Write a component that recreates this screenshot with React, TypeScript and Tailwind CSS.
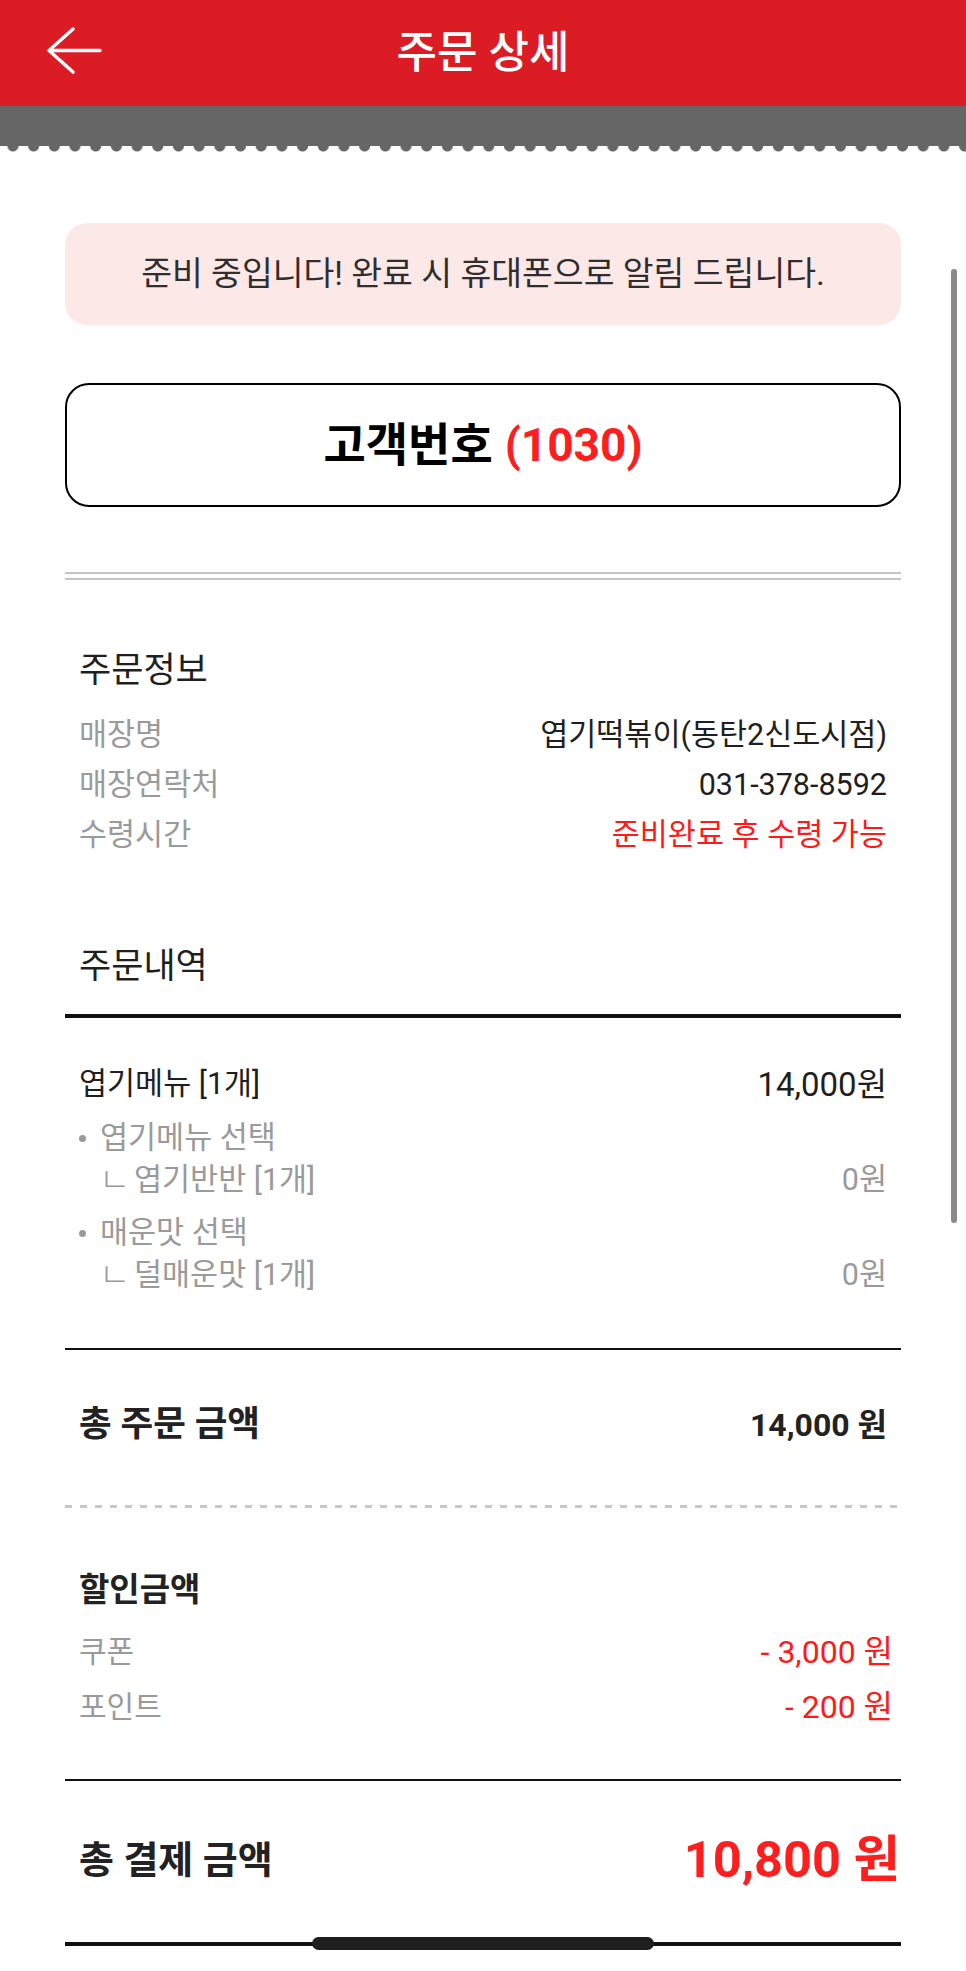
import React from 'react';

const FONT = "font-['Roboto','Noto_Sans_CJK_KR',sans-serif]";

function InfoRow({ label, value, red }: { label: string; value: string; red?: boolean }) {
	return (
		<div className="flex h-[50px] items-center justify-between text-[30.5px] leading-none">
			<span className="text-[#9a9a9a]">{label}</span>
			<span className={red ? 'text-[#ff1a1a]' : 'text-[#1f1f1f]'}>{value}</span>
		</div>
	);
}

function OptionGroup({ title, choice, price }: { title: string; choice: string; price: string }) {
	return (
		<div className="mt-[11px] text-[30.5px] leading-none text-[#9a9a9a]">
			<div className="flex h-[42px] items-center">
				<span className="h-[7px] w-[7px] rounded-full bg-[#9a9a9a]" />
				<span className="ml-[14px]">{title}</span>
			</div>
			<div className="flex h-[42px] items-center justify-between pl-[20px]">
				<span className="flex items-center">
					<span className="inline-block w-[35px] text-[34px] font-light leading-none">ㄴ</span>
					<span>{choice}</span>
				</span>
				<span>{price}</span>
			</div>
		</div>
	);
}

export default function App() {
	return (
		<div className={`relative min-h-[1971px] w-[966px] overflow-hidden bg-white ${FONT}`}>
			{/* header */}
			<div className="relative flex h-[106px] items-center justify-center bg-[#dc1c24]">
				<svg
					className="absolute left-[44px] top-[25px]"
					width="60"
					height="52"
					viewBox="44 25 60 52"
					fill="none"
					stroke="white"
					strokeWidth="3.5"
					strokeLinecap="round"
					strokeLinejoin="round"
				>
					<path d="M73 29 L49 50.5 L73 72 M49 50.5 H100" />
				</svg>
				<h1 className="text-[44px] font-medium leading-none text-white">주문 상세</h1>
			</div>
			<div className="h-[40px] bg-[#666666]" />
			<div className="h-[7px] bg-[radial-gradient(circle_at_50%_0,#666666_5px,transparent_6px)] bg-[length:20.7px_7px] bg-[position:2.6px_0] bg-repeat-x" />

			<main className="px-[65px] pb-[60px]">
				<div className="mt-[70px] flex h-[102px] items-center justify-center rounded-[22px] bg-[#fde8e8] text-[33.5px] leading-none text-[#2e2e2e]">
					준비 중입니다! 완료 시 휴대폰으로 알림 드립니다.
				</div>

				<div className="mt-[58px] flex h-[124px] items-center justify-center rounded-[24px] border-2 border-black text-[46px] font-bold leading-none">
					<span className="text-black">고객번호</span>
					<span className="ml-[12px] text-[#ff1e1e]">(1030)</span>
				</div>

				<div className="mt-[65px] h-[8px] border-y-2 border-[#c4c4c4]" />

				{/* 주문정보 */}
				<section className="px-[14px]">
					<h2 className="mt-[70px] flex h-[40px] items-center text-[35px] font-normal leading-none text-[#1f1f1f]">
						주문정보
					</h2>
					<div className="mt-[20px]">
						<InfoRow label="매장명" value="엽기떡볶이(동탄2신도시점)" />
						<InfoRow label="매장연락처" value="031-378-8592" />
						<InfoRow label="수령시간" value="준비완료 후 수령 가능" red />
					</div>
					<h2 className="mt-[86px] flex h-[40px] items-center text-[35px] font-normal leading-none text-[#1f1f1f]">
						주문내역
					</h2>
				</section>

				<div className="mt-[28px] h-[4px] bg-[#111111]" />

				<section className="px-[14px]">
					<div className="mt-[44px] flex h-[44px] items-center justify-between text-[30.5px] leading-none text-[#1f1f1f]">
						<span>엽기메뉴 [1개]</span>
						<span className="text-[33px]">14,000원</span>
					</div>
					<OptionGroup title="엽기메뉴 선택" choice="엽기반반 [1개]" price="0원" />
					<OptionGroup title="매운맛 선택" choice="덜매운맛 [1개]" price="0원" />
				</section>

				<div className="mt-[52px] h-[2px] bg-[#111111]" />

				<div className="mt-[50px] flex h-[50px] items-center justify-between px-[14px] font-bold leading-none text-[#222222]">
					<span className="text-[35.5px]">총 주문 금액</span>
					<span className="text-[32px]">14,000 원</span>
				</div>

				<div className="mt-[55px] h-[3px] bg-[repeating-linear-gradient(90deg,#c8c8c8_0_7px,transparent_7px_15px)]" />

				<section className="pl-[14px] pr-[8px]">
					<h3 className="mt-[61px] flex h-[40px] items-center text-[33px] font-bold leading-none text-[#222222]">
						할인금액
					</h3>
					<div className="mt-[15px]">
						<div className="flex h-[55px] items-center justify-between leading-none">
							<span className="text-[30px] text-[#9a9a9a]">쿠폰</span>
							<span className="text-[32px] text-[#ff1a1a]">- 3,000 원</span>
						</div>
						<div className="flex h-[55px] items-center justify-between leading-none">
							<span className="text-[30px] text-[#9a9a9a]">포인트</span>
							<span className="text-[32px] text-[#ff1a1a]">- 200 원</span>
						</div>
					</div>
				</section>

				<div className="mt-[45px] h-[2px] bg-[#111111]" />

				<div className="mt-[49px] flex h-[60px] items-center justify-between pl-[14px] pr-[1px] leading-none">
					<span className="text-[38px] font-bold text-[#222222]">총 결제 금액</span>
					<span className="text-[50.5px] font-bold text-[#ff1e1e]">10,800 원</span>
				</div>

				<div className="mt-[52px] h-[4px] bg-[#111111]" />
			</main>

			{/* overlay scrollbar */}
			<div className="absolute right-[9px] top-[269px] h-[954px] w-[6px] rounded-full bg-[#8a8a8a]" />
			{/* system home indicator */}
			<div className="absolute left-[312px] top-[1937px] h-[13px] w-[342px] rounded-full bg-[#1e1e1e]" />
		</div>
	);
}
